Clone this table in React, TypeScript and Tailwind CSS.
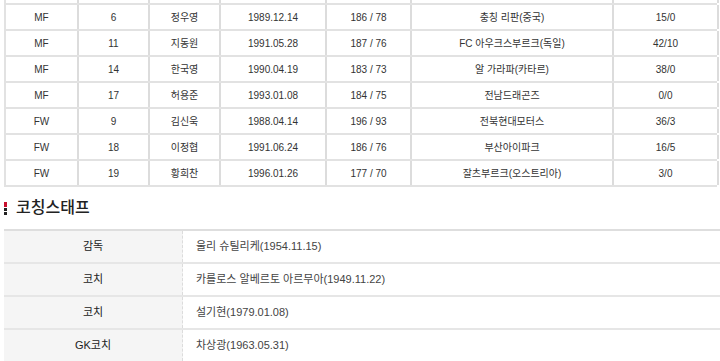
const players = [
  ["MF", "6", "정우영", "1989.12.14", "186 / 78", "충칭 리판(중국)", "15/0"],
  ["MF", "11", "지동원", "1991.05.28", "187 / 76", "FC 아우크스부르크(독일)", "42/10"],
  ["MF", "14", "한국영", "1990.04.19", "183 / 73", "알 가라파(카타르)", "38/0"],
  ["MF", "17", "허용준", "1993.01.08", "184 / 75", "전남드래곤즈", "0/0"],
  ["FW", "9", "김신욱", "1988.04.14", "196 / 93", "전북현대모터스", "36/3"],
  ["FW", "18", "이정협", "1991.06.24", "186 / 76", "부산아이파크", "16/5"],
  ["FW", "19", "황희찬", "1996.01.26", "177 / 70", "잘츠부르크(오스트리아)", "3/0"],
];

const staff = [
  ["감독", "울리 슈틸리케(1954.11.15)"],
  ["코치", "카를로스 알베르토 아르무아(1949.11.22)"],
  ["코치", "설기현(1979.01.08)"],
  ["GK코치", "차상광(1963.05.31)"],
];

const cols = "grid grid-cols-[73px_71px_71px_106px_85px_202px_105px]";

export default function App() {
  return (
    <div
      className="h-[361px] w-[720px] overflow-hidden bg-white text-[10px] text-[#333]"
      style={{ fontFamily: '"Liberation Sans", "Noto Sans CJK KR", sans-serif' }}
    >
      <div className="ml-[4px] w-[713px] border-l-2 border-[#e2e2e2]">
        {/* tail of the row above, cut off by the viewport */}
        <div className={`${cols} h-[5px] border-b-2 border-[#e2e2e2]`}>
          {Array.from({ length: 7 }).map((_, i) => (
            <div key={i} className="border-r-2 border-[#dcdcdc]" />
          ))}
        </div>
        {players.map((p, r) => (
          <div key={r} className={`${cols} h-[26px] border-b-2 border-[#e2e2e2]`}>
            {p.map((v, i) => (
              <div
                key={i}
                className="flex items-center justify-center border-r-2 border-[#dcdcdc]"
              >
                {v}
              </div>
            ))}
          </div>
        ))}
      </div>

      <div className="flex h-[42px] items-center gap-[9px] pl-[4px]">
        <div className="flex w-[3px] flex-col gap-[1px]">
          <div className="h-[5px] bg-[#c8102e]" />
          <div className="h-[3px] bg-[#222]" />
          <div className="h-[3px] bg-[#222]" />
        </div>
        <h2 className="text-[16px] font-medium text-[#222]">코칭스태프</h2>
      </div>

      <div className="ml-[4px] border-t-2 border-[#dedede] text-[11px]">
        {staff.map(([label, value], i) => (
          <div key={i} className="flex h-[33px] border-b-2 border-[#e6e6e6]">
            <div className="flex w-[179px] items-center justify-center border-r border-dashed border-[#dcdcdc] bg-[#f5f5f5] text-[#222]">
              {label}
            </div>
            <div className="flex flex-1 items-center pl-[13px] text-[#444]">{value}</div>
          </div>
        ))}
      </div>
    </div>
  );
}
